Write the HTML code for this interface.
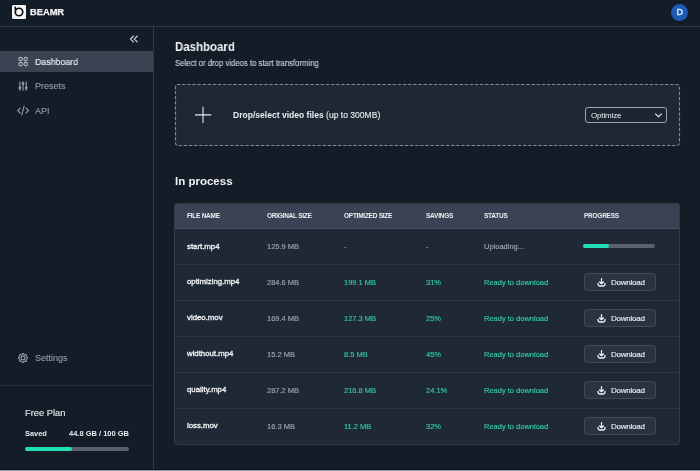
<!DOCTYPE html>
<html><head><meta charset="utf-8">
<style>
*{box-sizing:border-box;margin:0;padding:0}
html,body{width:700px;height:471px;overflow:hidden;background:#141c28;font-family:"Liberation Sans",sans-serif;color:#e6e9ee}
.abs{position:absolute}
#hdr{left:0;top:0;width:700px;height:27px;border-bottom:1px solid #313a46;background:#141c28}
#side{left:0;top:27px;width:154px;height:444px;border-right:1px solid #313a46;background:#141c28}
.t{position:absolute;white-space:nowrap;line-height:1;will-change:transform;-webkit-text-stroke:0.12px currentColor}
.h6,b,.t[style*="font-weight:bold"]{-webkit-text-stroke:0}
.nav{position:absolute;left:0;width:153px;height:21px}
.act{background:#3a4352}
.dz{left:175px;top:84px;width:505px;height:62px;border-radius:3px;background:#1e2834}
.sel{left:585px;top:107px;width:82px;height:16px;border:1px solid #9ea5ae;border-radius:3px;background:#1c2531}
.tbl{left:174px;top:203px;width:506px;height:242px;border:1px solid transparent;border-radius:3px;background:#1f2935;overflow:hidden}
.tblb{left:174px;top:203px;width:506px;height:242px;border:1px solid rgba(255,255,255,0.085);border-radius:3px;z-index:3}
.th{left:-1px;top:-1px;width:506px;height:26px;background:#3a4353;border-bottom:1px solid #465060}
.row{position:absolute;left:0;width:504px;height:36px}
.bt{border-top:1px solid #2c3541}
.row .t{top:14px}
.bt .t{top:13.5px}
.btn{top:9px}
.bt .btn{top:8px}
.btn .dt{left:25.7px;top:5px!important;font-size:8px;letter-spacing:-0.25px;color:#eef0f3}
.pb{height:4px;border-radius:2px;background:#5c626b}
.pg{height:4px;border-radius:2px;background:#22dfb6}
.btn{position:absolute;left:409px;width:72px;height:18px;border:1px solid #424a56;border-radius:3px;background:#2b3340}
.h6{font-size:6.5px;font-weight:bold;letter-spacing:-0.25px;color:#eceef1}
.fn{font-size:7.8px;color:#eceef1;-webkit-text-stroke:0.35px #eceef1!important}
.row .fn{top:13.6px}
.bt .fn{top:13.1px}
.gr{font-size:7.5px;color:#a3a9b1}
.gn{font-size:7.5px;color:#34d0a6}
</style></head><body>
<div id="hdr" class="abs">
  <div class="t" style="left:30.3px;top:8px;font-size:9.3px;font-weight:bold;color:#f2f4f6;-webkit-text-stroke:0.25px #f2f4f6">BEAMR</div>
  <div class="abs" style="left:670.5px;top:3.5px;width:17.5px;height:17.5px;border-radius:50%;background:#1d5ab3"></div>
  <div class="t" style="left:670.8px;top:7.5px;width:17.5px;text-align:center;font-size:9px;color:#dce8fb;-webkit-text-stroke:0.4px #dce8fb">D</div>
</div>
<div id="side" class="abs">
  <div class="nav act" style="top:24px"></div>
  <div class="t" style="left:35.4px;top:29.9px;font-size:9.5px;color:#f0f2f5;transform:scaleX(0.925);transform-origin:0 0">Dashboard</div>
  <div class="t" style="left:35px;top:55.2px;font-size:9px;color:#949aa2">Presets</div>
  <div class="t" style="left:35px;top:80.2px;font-size:9px;color:#949aa2">API</div>
  <div class="t" style="left:35px;top:327.2px;font-size:9px;color:#949aa2">Settings</div>
  <div class="abs" style="left:0;top:358px;width:153px;height:1px;background:#262e3a"></div>
  <div class="t" style="left:24.6px;top:382px;font-size:9.3px;color:#e6e9ee">Free Plan</div>
  <div class="t" style="left:24.6px;top:403px;font-size:7.4px;font-weight:bold;color:#e8ebef">Saved</div>
  <div class="t" style="left:69px;top:403px;font-size:7.5px;font-weight:bold;color:#e8ebef">44.8 GB / 100 GB</div>
  <div class="abs" style="left:25px;top:420px;width:104px;height:4px;border-radius:2px;background:#5b6069"></div>
  <div class="abs" style="left:25px;top:420px;width:47px;height:4px;border-radius:2px;background:#22dfb6"></div>
</div>
<div class="t" style="left:174.5px;top:41px;font-size:12.4px;font-weight:bold;color:#f0f2f5;transform:scaleX(0.925);transform-origin:0 0">Dashboard</div>
<div class="t" style="left:174.8px;top:58.5px;font-size:8.4px;color:#cfd4da;transform:scaleX(0.925);transform-origin:0 0">Select or drop videos to start transforming</div>
<div class="abs dz"></div>
<svg class="abs" style="left:0;top:0" width="700" height="160"><rect x="175.5" y="84.5" width="504" height="61" rx="2.5" fill="none" stroke="#7f8791" stroke-width="1.15" stroke-dasharray="3.4 1.74" stroke-dashoffset="1.2"/></svg>
<div class="t" style="left:233px;top:111.2px;font-size:8.55px;color:#e8ebef"><b>Drop/select video files</b> (up to 300MB)</div>
<div class="abs sel"></div>
<div class="t" style="left:591px;top:111.5px;font-size:8px;letter-spacing:-0.15px;color:#eceef1;-webkit-text-stroke:0">Optimize</div>
<div class="t" style="left:174.5px;top:175.5px;font-size:11.5px;font-weight:bold;color:#f0f2f5">In process</div>
<div class="abs tbl">
  <div class="abs th"></div>
  <div class="t h6" style="top:8.6px;left:12px">FILE NAME</div>
  <div class="t h6" style="top:8.6px;left:92px">ORIGINAL SIZE</div>
  <div class="t h6" style="top:8.6px;left:169px">OPTIMIZED SIZE</div>
  <div class="t h6" style="top:8.6px;left:251px">SAVINGS</div>
  <div class="t h6" style="top:8.6px;left:309px">STATUS</div>
  <div class="t h6" style="top:8.6px;left:409px">PROGRESS</div>
  <div class="row" style="top:25px">
    <div class="t fn" style="left:12px">start.mp4</div>
    <div class="t gr" style="left:92px">125.9 MB</div>
    <div class="t gr" style="left:169px">-</div>
    <div class="t gr" style="left:251px">-</div>
    <div class="t gr" style="left:309px">Uploading...</div>
    <div class="abs pb" style="left:408px;top:15px;width:72px"></div><div class="abs pg" style="left:408px;top:15px;width:26px"></div>
  </div>
  <div class="row bt" style="top:60px">
    <div class="t fn" style="left:12px">optimizing.mp4</div>
    <div class="t gr" style="left:92px">284.6 MB</div>
    <div class="t gn" style="left:169px">199.1 MB</div>
    <div class="t gn" style="left:251px">31%</div>
    <div class="t gn" style="left:309px">Ready to download</div>
    <div class="btn"><svg class="abs" style="left:11.5px;top:3.5px" width="10" height="10" viewBox="0 0 10 10"><path d="M4.5 0.7V5.4M2.6 3.9L4.5 5.7L6.4 3.9M1 5.3V6.2Q1 8 2.8 8H6.2Q8 8 8 6.2V5.3" fill="none" stroke="#eef0f3" stroke-width="1.35" stroke-linecap="round" stroke-linejoin="round"/></svg><div class="t dt">Download</div></div>
  </div>
  <div class="row bt" style="top:96px">
    <div class="t fn" style="left:12px">video.mov</div>
    <div class="t gr" style="left:92px">169.4 MB</div>
    <div class="t gn" style="left:169px">127.3 MB</div>
    <div class="t gn" style="left:251px">25%</div>
    <div class="t gn" style="left:309px">Ready to download</div>
    <div class="btn"><svg class="abs" style="left:11.5px;top:3.5px" width="10" height="10" viewBox="0 0 10 10"><path d="M4.5 0.7V5.4M2.6 3.9L4.5 5.7L6.4 3.9M1 5.3V6.2Q1 8 2.8 8H6.2Q8 8 8 6.2V5.3" fill="none" stroke="#eef0f3" stroke-width="1.35" stroke-linecap="round" stroke-linejoin="round"/></svg><div class="t dt">Download</div></div>
  </div>
  <div class="row bt" style="top:132px">
    <div class="t fn" style="left:12px">widthout.mp4</div>
    <div class="t gr" style="left:92px">15.2 MB</div>
    <div class="t gn" style="left:169px">8.5 MB</div>
    <div class="t gn" style="left:251px">45%</div>
    <div class="t gn" style="left:309px">Ready to download</div>
    <div class="btn"><svg class="abs" style="left:11.5px;top:3.5px" width="10" height="10" viewBox="0 0 10 10"><path d="M4.5 0.7V5.4M2.6 3.9L4.5 5.7L6.4 3.9M1 5.3V6.2Q1 8 2.8 8H6.2Q8 8 8 6.2V5.3" fill="none" stroke="#eef0f3" stroke-width="1.35" stroke-linecap="round" stroke-linejoin="round"/></svg><div class="t dt">Download</div></div>
  </div>
  <div class="row bt" style="top:168px">
    <div class="t fn" style="left:12px">quality.mp4</div>
    <div class="t gr" style="left:92px">287.2 MB</div>
    <div class="t gn" style="left:169px">216.8 MB</div>
    <div class="t gn" style="left:251px">24.1%</div>
    <div class="t gn" style="left:309px">Ready to download</div>
    <div class="btn"><svg class="abs" style="left:11.5px;top:3.5px" width="10" height="10" viewBox="0 0 10 10"><path d="M4.5 0.7V5.4M2.6 3.9L4.5 5.7L6.4 3.9M1 5.3V6.2Q1 8 2.8 8H6.2Q8 8 8 6.2V5.3" fill="none" stroke="#eef0f3" stroke-width="1.35" stroke-linecap="round" stroke-linejoin="round"/></svg><div class="t dt">Download</div></div>
  </div>
  <div class="row bt" style="top:204px">
    <div class="t fn" style="left:12px">loss.mov</div>
    <div class="t gr" style="left:92px">16.3 MB</div>
    <div class="t gn" style="left:169px">11.2 MB</div>
    <div class="t gn" style="left:251px">32%</div>
    <div class="t gn" style="left:309px">Ready to download</div>
    <div class="btn"><svg class="abs" style="left:11.5px;top:3.5px" width="10" height="10" viewBox="0 0 10 10"><path d="M4.5 0.7V5.4M2.6 3.9L4.5 5.7L6.4 3.9M1 5.3V6.2Q1 8 2.8 8H6.2Q8 8 8 6.2V5.3" fill="none" stroke="#eef0f3" stroke-width="1.35" stroke-linecap="round" stroke-linejoin="round"/></svg><div class="t dt">Download</div></div>
  </div>
</div>
<div class="abs tblb"></div>
<svg class="abs" style="left:0;top:0;z-index:5;pointer-events:none" width="700" height="471" viewBox="0 0 700 471">
  <rect x="12" y="5" width="14" height="14" rx="1.2" fill="#f4f4f4"/>
  <circle cx="19" cy="11.95" r="3.75" fill="none" stroke="#0d0d0d" stroke-width="1.65"/>
  <path d="M15.1 7.3L15.6 10.2" fill="none" stroke="#0d0d0d" stroke-width="1.65" stroke-linecap="round"/>
  <g fill="none" stroke="#b3b9c1" stroke-width="1.1">
    <circle cx="20.6" cy="59.1" r="1.75"/><circle cx="25.7" cy="59.1" r="1.75"/>
    <circle cx="20.6" cy="64.1" r="1.75"/><circle cx="25.7" cy="64.1" r="1.75"/>
  </g>
  <g fill="none" stroke="#979da6" stroke-width="1.1" stroke-linecap="round">
    <path d="M19.9 81.8V90.3M23 81.8V90.3M26.2 81.8V90.3"/>
    <circle cx="19.9" cy="88" r="0.9" fill="#979da6"/>
    <circle cx="23" cy="83.6" r="0.9" fill="#979da6"/>
    <circle cx="26.2" cy="88" r="0.9" fill="#979da6"/>
    <path d="M20.2 108.2L17.8 110.6L20.2 113M26 108.2L28.4 110.6L26 113M24.1 106.3L21.8 114.9"/>
    <path d="M133.5 36L130.5 39L133.5 42M137.3 36L134.3 39L137.3 42" stroke="#c3c8cf" stroke-width="1.15"/>
  </g>
  <g transform="translate(23 358)" fill="none" stroke="#979da6" stroke-width="1.1">
    <path d="M4.55 0.00 L4.52 0.18 L4.43 0.35 L4.29 0.51 L4.12 0.65 L3.92 0.78 L3.72 0.89 L3.54 1.00 L3.38 1.10 L3.26 1.20 L3.19 1.32 L3.16 1.46 L3.17 1.61 L3.21 1.80 L3.27 2.00 L3.33 2.22 L3.37 2.45 L3.40 2.68 L3.38 2.89 L3.32 3.07 L3.22 3.22 L3.07 3.32 L2.89 3.38 L2.68 3.40 L2.45 3.37 L2.22 3.33 L2.00 3.27 L1.80 3.21 L1.61 3.17 L1.46 3.16 L1.32 3.19 L1.20 3.26 L1.10 3.38 L1.00 3.54 L0.89 3.72 L0.78 3.92 L0.65 4.12 L0.51 4.29 L0.35 4.43 L0.18 4.52 L0.00 4.55 L-0.18 4.52 L-0.35 4.43 L-0.51 4.29 L-0.65 4.12 L-0.78 3.92 L-0.89 3.72 L-1.00 3.54 L-1.10 3.38 L-1.20 3.26 L-1.32 3.19 L-1.46 3.16 L-1.61 3.17 L-1.80 3.21 L-2.00 3.27 L-2.22 3.33 L-2.45 3.37 L-2.68 3.40 L-2.89 3.38 L-3.07 3.32 L-3.22 3.22 L-3.32 3.07 L-3.38 2.89 L-3.40 2.68 L-3.37 2.45 L-3.33 2.22 L-3.27 2.00 L-3.21 1.80 L-3.17 1.61 L-3.16 1.46 L-3.19 1.32 L-3.26 1.20 L-3.38 1.10 L-3.54 1.00 L-3.72 0.89 L-3.92 0.78 L-4.12 0.65 L-4.29 0.51 L-4.43 0.35 L-4.52 0.18 L-4.55 0.00 L-4.52 -0.18 L-4.43 -0.35 L-4.29 -0.51 L-4.12 -0.65 L-3.92 -0.78 L-3.72 -0.89 L-3.54 -1.00 L-3.38 -1.10 L-3.26 -1.20 L-3.19 -1.32 L-3.16 -1.46 L-3.17 -1.61 L-3.21 -1.80 L-3.27 -2.00 L-3.33 -2.22 L-3.37 -2.45 L-3.40 -2.68 L-3.38 -2.89 L-3.32 -3.07 L-3.22 -3.22 L-3.07 -3.32 L-2.89 -3.38 L-2.68 -3.40 L-2.45 -3.37 L-2.22 -3.33 L-2.00 -3.27 L-1.80 -3.21 L-1.61 -3.17 L-1.46 -3.16 L-1.32 -3.19 L-1.20 -3.26 L-1.10 -3.38 L-1.00 -3.54 L-0.89 -3.72 L-0.78 -3.92 L-0.65 -4.12 L-0.51 -4.29 L-0.35 -4.43 L-0.18 -4.52 L-0.00 -4.55 L0.18 -4.52 L0.35 -4.43 L0.51 -4.29 L0.65 -4.12 L0.78 -3.92 L0.89 -3.72 L1.00 -3.54 L1.10 -3.38 L1.20 -3.26 L1.32 -3.19 L1.46 -3.16 L1.61 -3.17 L1.80 -3.21 L2.00 -3.27 L2.22 -3.33 L2.45 -3.37 L2.68 -3.40 L2.89 -3.38 L3.07 -3.32 L3.22 -3.22 L3.32 -3.07 L3.38 -2.89 L3.40 -2.68 L3.37 -2.45 L3.33 -2.22 L3.27 -2.00 L3.21 -1.80 L3.17 -1.61 L3.16 -1.46 L3.19 -1.32 L3.26 -1.20 L3.38 -1.10 L3.54 -1.00 L3.72 -0.89 L3.92 -0.78 L4.12 -0.65 L4.29 -0.51 L4.43 -0.35 L4.52 -0.18 L4.55 -0.00Z"/>
    <circle cx="0" cy="0" r="1.9"/>
  </g>
  <g fill="none" stroke="#e6e9ee" stroke-width="1.1">
    <path d="M203 106.8V123M195 114.9H211.2"/>
  </g>
  <path d="M655.6 114L658.5 116.8L661.4 114" fill="none" stroke="#d5d9de" stroke-width="1.2" stroke-linecap="round" stroke-linejoin="round"/>
</svg>
<div class="abs" style="left:0;top:469px;width:700px;height:1px;background:#0c121b;z-index:6"></div>
<div class="abs" style="left:0;top:470px;width:700px;height:1px;background:#8f989f;z-index:6"></div>
</body></html>
